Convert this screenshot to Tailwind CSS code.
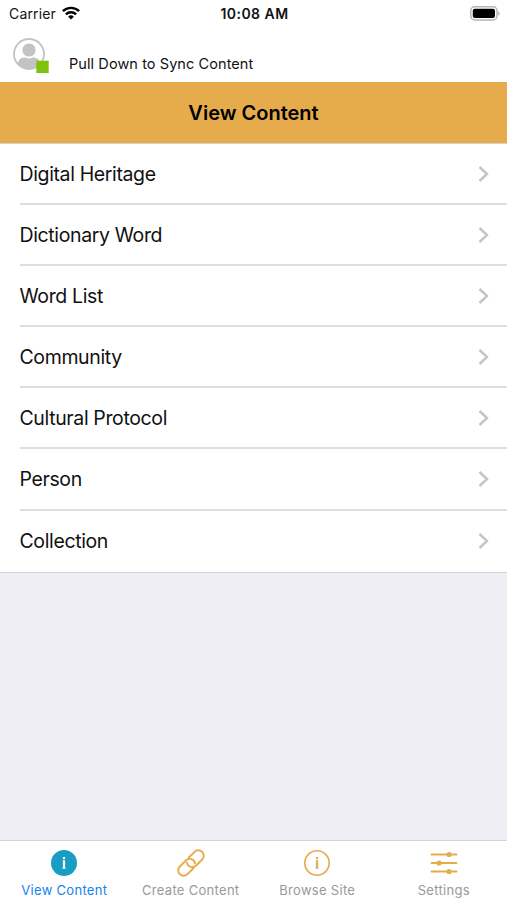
<!DOCTYPE html>
<html lang="en">
<head>
<meta charset="utf-8">
<meta name="viewport" content="width=device-width, initial-scale=1">
<title>View Content</title>
<script src="https://cdn.jsdelivr.net/npm/@tailwindcss/browser@4"></script>
</head>
<body class="font-['Inter',sans-serif] bg-white text-[#111]">
<div class="flex h-[900px] w-[507px] flex-col overflow-hidden whitespace-nowrap bg-[#efeef4]">
  <header class="h-[82px] shrink-0 bg-white">
    <div class="grid h-[27px] grid-cols-3 items-center pl-[9px] pr-[7px]">
      <div class="flex items-center gap-1.5 text-[14px]">
        <span class="tracking-[0.15px]">Carrier</span>
        <svg class="h-[14px] w-[18px] -translate-y-px" viewBox="0 0 18 14" fill="none" stroke="#000" stroke-width="2.4"><path d="M.9 5.2a11.6 11.6 0 0 1 16.2 0M3.9 8.3a7.3 7.3 0 0 1 10.2 0"/><path d="M9 13.6 6.1 10.7a4.1 4.1 0 0 1 5.8 0z" fill="#000" stroke="none"/></svg>
      </div>
      <div class="text-center text-[14px] font-semibold tracking-[0.45px]">10:08 AM</div>
      <svg class="h-[15px] w-[31px] justify-self-end" viewBox="0 0 31 15"><rect x="1.8" y=".8" width="26.2" height="13.2" rx="4" fill="#fff" stroke="#b5b5b5" stroke-width="1.5"/><rect x="3.8" y="2.8" width="22.2" height="9.2" rx="2" fill="#000"/><path d="M29.2 5.2c2 .8 2 3.7 0 4.5z" fill="#b5b5b5"/></svg>
    </div>
    <div class="flex pl-[13px] pt-[11px]">
      <svg class="h-[36px] w-[36px]" viewBox="0 0 36 36"><defs><clipPath id="face"><circle cx="16" cy="16" r="15"/></clipPath></defs><circle cx="16" cy="16" r="15" fill="#fff" stroke="#c3c3c3" stroke-width="1.8"/><g fill="#c3c3c3" clip-path="url(#face)"><circle cx="16" cy="12" r="6.6"/><path d="M5 32V26c0-4.5 3-6.5 7.5-6.5q3.5 2 7 0c4.5 0 7.5 2 7.5 6.5v6z"/></g><rect x="23.3" y="22.7" width="12.4" height="12.3" fill="#7fc20b"/></svg>
      <span class="ml-5 mt-4 text-[14.5px] leading-5 tracking-[0.08px]">Pull Down to Sync Content</span>
    </div>
  </header>
  <h1 class="flex h-[61px] shrink-0 items-center justify-center bg-[#e6ab4b] text-[20px] font-semibold text-black">View Content</h1>
  <ul class="h-[430px] shrink-0 border-y border-[#d3d3d6] bg-white text-[19.5px] tracking-[-0.37px]" id="content"></ul>
  <nav class="mt-auto grid h-[60px] grid-cols-4 border-t border-[#d4d4d6] bg-white pl-px text-[13px] tracking-[0.3px] text-[#999]">
    <a class="flex flex-col items-center pt-2 text-[#1683f0]">
      <svg class="size-7" viewBox="0 0 28 28"><circle cx="14" cy="14" r="13" fill="#189dc3"/><g fill="#fff"><circle cx="14" cy="9" r="1.3"/><path d="M12.7 11.2h2.400v7.500h.5v1h-3.200v-1h.5v-6.500h-.2z"/></g></svg>
      <span class="leading-[26px]">View Content</span>
    </a>
    <a class="flex flex-col items-center pt-2">
      <svg class="size-7" viewBox="0 0 28 28" fill="none" stroke="#e6ab4b" stroke-width="1.9" stroke-linecap="round"><g transform="translate(14 14) rotate(-45)"><path d="M2-5.400H10.400A5.400 5.400 0 0 1 10.400 5.400H1.800A5.400 5.400 0 0 1-2.600-3.100"/><path d="M-2 5.400H-10.400A5.400 5.400 0 0 1-10.400-5.400H-1.800A5.400 5.400 0 0 1 2.600 3.100"/></g></svg>
      <span class="leading-[26px]">Create Content</span>
    </a>
    <a class="flex flex-col items-center pt-2">
      <svg class="size-7" viewBox="0 0 28 28"><circle cx="14" cy="14" r="12.2" fill="none" stroke="#e6ab4b" stroke-width="1.6"/><g fill="#e6ab4b"><circle cx="14" cy="9" r="1.3"/><path d="M12.7 11.2h2.400v7.500h.5v1h-3.200v-1h.5v-6.500h-.2z"/></g></svg>
      <span class="leading-[26px]">Browse Site</span>
    </a>
    <a class="flex flex-col items-center pt-2">
      <svg class="size-7" viewBox="0 0 28 28"><path d="M1.500 5.500h25M1.500 14h25M1.500 22.500h25" stroke="#e6ab4b" stroke-width="1.8" stroke-linecap="round"/><g fill="#e6ab4b"><circle cx="19" cy="5.500" r="2.600"/><circle cx="9" cy="14" r="2.600"/><circle cx="19" cy="22.500" r="2.600"/></g></svg>
      <span class="leading-[26px]">Settings</span>
    </a>
  </nav>
</div>
<script>
const items = ["Digital Heritage","Dictionary Word","Word List","Community","Cultural Protocol","Person","Collection"];
document.getElementById("content").innerHTML = items.map((name, i) =>
  `<li class="ml-[19.5px] flex h-[61.1px] items-center justify-between pr-[18px] ${i < items.length - 1 ? "border-b-2 border-[#dedee0]" : ""}"><span class="translate-y-px">${name}</span><svg class="h-[18px] w-[11px]" viewBox="0 0 11 18" fill="none" stroke="#c4c4c7" stroke-width="2.4"><path d="m1.500 2 7.500 7-7.500 7"/></svg></li>`).join("");
</script>
</body>
</html>
